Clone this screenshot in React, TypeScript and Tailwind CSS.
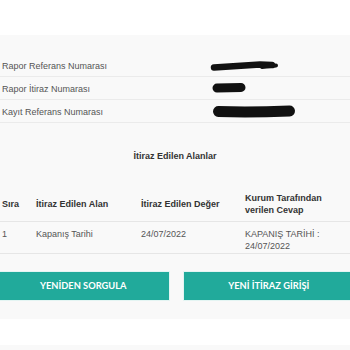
import React from 'react';

const infoRows = [
  { label: 'Rapor Referans Numarası', mark: 1 },
  { label: 'Rapor İtiraz Numarası', mark: 2 },
  { label: 'Kayıt Referans Numarası', mark: 3 },
];

// hand-drawn redaction strokes over the reference numbers
const Scribble = ({ kind }: { kind: number }) => {
  if (kind === 1) {
    return (
      <svg width="90" height="23" viewBox="0 0 90 23" className="block">
        <path d="M4 13.5 C18 12.5 34 11.5 50 10.5 L62 11" stroke="#111" strokeWidth="6.5" strokeLinecap="round" fill="none" />
        <path d="M52 13 L66 11.5" stroke="#111" strokeWidth="4" strokeLinecap="round" fill="none" />
      </svg>
    );
  }
  if (kind === 2) {
    return (
      <svg width="90" height="23" viewBox="0 0 90 23" className="block">
        <path d="M7 11 L31 10.5" stroke="#111" strokeWidth="9" strokeLinecap="round" fill="none" />
      </svg>
    );
  }
  return (
    <svg width="90" height="23" viewBox="0 0 90 23" className="block">
      <path d="M8.5 11.5 Q40 12.5 79.5 11" stroke="#111" strokeWidth="11" strokeLinecap="round" fill="none" />
    </svg>
  );
};

export default function App() {
  return (
    <div className="w-[350px] h-[350px] overflow-hidden bg-white font-['Liberation_Sans',Arial,sans-serif]">
      <div className="h-[35px]" />
      <div className="bg-[#f9f9f9] pt-[19px] pb-[22px] h-[284px]">
        {infoRows.map(r => (
          <div
            key={r.label}
            className="grid grid-cols-[208px_1fr] items-center h-[23px] box-border border-b border-[#ebebeb] pl-[2px] text-[9px] text-[#555]"
          >
            <span className="pt-[2px]">{r.label}</span>
            <Scribble kind={r.mark} />
          </div>
        ))}

        <div className="mt-[27px] text-center text-[9px] leading-[12px] font-bold text-[#333]">
          İtiraz Edilen Alanlar
        </div>

        <div className="mt-[30px] text-[9px]">
          <div className="grid grid-cols-[34px_105px_104px_1fr] items-center pl-[2px] pb-[5px] border-b border-[#e6e6e6] font-bold text-[#333] leading-[12px]">
            <span>Sıra</span>
            <span>İtiraz Edilen Alan</span>
            <span>İtiraz Edilen Değer</span>
            <span>
              Kurum Tarafından
              <br />
              verilen Cevap
            </span>
          </div>
          <div className="grid grid-cols-[34px_105px_104px_1fr] items-start pl-[2px] pt-[6px] pb-[1px] border-b border-[#e6e6e6] text-[#555] leading-[12px]">
            <span>1</span>
            <span>Kapanış Tarihi</span>
            <span>24/07/2022</span>
            <span>
              KAPANIŞ TARİHİ :
              <br />
              24/07/2022
            </span>
          </div>
        </div>

        <div className="-ml-[2px] w-[356px] mt-[18px] grid grid-cols-2 gap-[15px]">
          <button className="h-[28px] bg-[#21aa9b] text-white font-['Lato',sans-serif] font-bold text-[9.3px] shadow-[0_0_0_1px_#e4f5f3]">
            YENİDEN SORGULA
          </button>
          <button className="h-[28px] bg-[#21aa9b] text-white font-['Lato',sans-serif] font-bold text-[9.3px] shadow-[0_0_0_1px_#e4f5f3]">
            YENİ İTİRAZ GİRİŞİ
          </button>
        </div>
      </div>
      <div className="h-[26px] bg-white" />
      <div className="h-[5px] bg-[#f9f9f9]" />
    </div>
  );
}
